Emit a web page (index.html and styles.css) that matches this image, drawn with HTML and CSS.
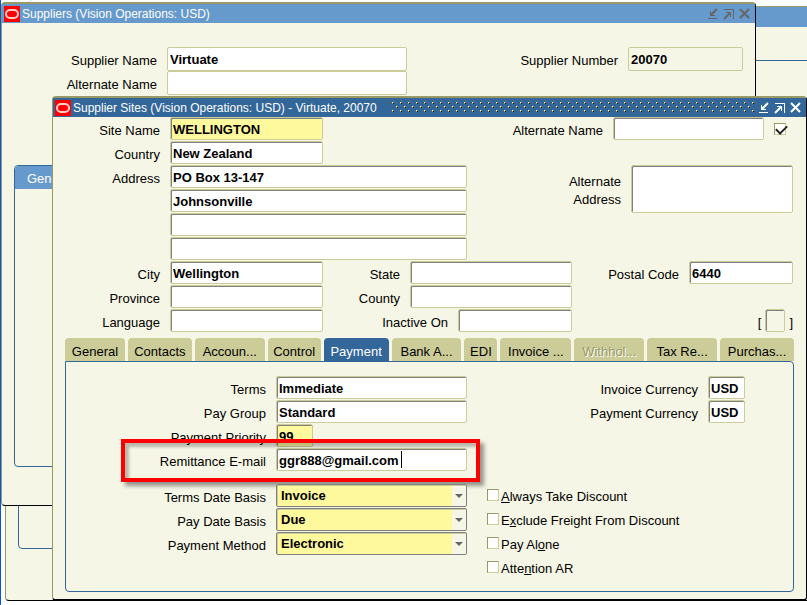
FILE: index.html
```
<!DOCTYPE html>
<html lang="en">
<head>
    <meta charset="UTF-8" />
    <meta name="viewport" content="width=device-width, initial-scale=1" />
    <title>Supplier Sites</title>
    <link rel="stylesheet" href="styles.css">
</head>
<body>
    <svg class="sprite" aria-hidden="true">
        <symbol id="oracle" viewBox="0 0 16 16">
            <rect width="16" height="16" fill="#ff0000" />
            <rect x="2" y="4" width="12" height="8" rx="4" fill="none" stroke="#ffd0c8" stroke-width="2" />
        </symbol>
        <symbol id="minimize" viewBox="0 0 12 12">
            <path d="M1 10h9v1h-9zM3 3h1v4h4v1h-5z" fill="currentColor" />
            <path d="M10 1L4 7" fill="none" stroke="currentColor" stroke-width="2" />
        </symbol>
        <symbol id="maximize" viewBox="0 0 12 12">
            <path d="M1 1h10v10h-1v-9h-9zM3 4h5v5h-1v-4h-4z" fill="currentColor" />
            <path d="M1 11L7 5" fill="none" stroke="currentColor" stroke-width="2" />
        </symbol>
        <symbol id="close" viewBox="0 0 12 12">
            <path d="M1 1l9 9M10 1L1 10" fill="none" stroke="currentColor" stroke-width="2" />
        </symbol>
    </svg>

    <div class="desktop">
        <div class="window window-back">
            <div class="title-bar"></div>
            <div class="back-panel"></div>
        </div>

        <section class="window window-suppliers">
            <header class="title-bar">
                <svg class="logo"><use href="#oracle" /></svg>
                <h2>Suppliers (Vision Operations: USD)</h2>
                <div class="window-buttons">
                    <button type="button" aria-label="Minimize"><svg><use href="#minimize" /></svg></button>
                    <button type="button" aria-label="Maximize"><svg><use href="#maximize" /></svg></button>
                    <button type="button" aria-label="Close"><svg><use href="#close" /></svg></button>
                </div>
            </header>
            <form class="supplier-form">
                <div class="supplier-main">
                    <div class="row">
                        <label for="supplierName">Supplier Name</label>
                        <input class="flat w-supplier" type="text" id="supplierName" value="Virtuate" />
                    </div>
                    <div class="row">
                        <label for="supplierAlt">Alternate Name</label>
                        <input class="flat w-supplier" type="text" id="supplierAlt" />
                    </div>
                </div>
                <div class="row">
                    <label for="supplierNumber">Supplier Number</label>
                    <input class="flat readonly w-number" type="text" id="supplierNumber" value="20070" readonly />
                </div>
            </form>
            <div class="supplier-panel">
                <button type="button" class="supplier-tab">General</button>
            </div>
        </section>

        <section class="window window-sites">
            <header class="title-bar">
                <svg class="logo"><use href="#oracle" /></svg>
                <h2>Supplier Sites (Vision Operations: USD) - Virtuate, 20070</h2>
                <svg class="grip" aria-hidden="true">
                    <pattern id="dots" width="8" height="8" patternUnits="userSpaceOnUse">
                        <path d="M0 0h1v1h-1zM4 4h1v1h-1z" fill="#ffffcc" />
                        <path d="M1 0h1v1h-1zM0 1h1v1h-1zM5 4h1v1h-1zM4 5h1v1h-1z" fill="#999966" />
                        <path d="M1 1h1v1h-1zM5 5h1v1h-1z" fill="#000000" />
                    </pattern>
                    <rect width="100%" height="12" fill="url(#dots)" />
                </svg>
                <div class="window-buttons">
                    <button type="button" aria-label="Minimize"><svg><use href="#minimize" /></svg></button>
                    <button type="button" aria-label="Maximize"><svg><use href="#maximize" /></svg></button>
                    <button type="button" aria-label="Close"><svg><use href="#close" /></svg></button>
                </div>
            </header>

            <form class="sites-form">
                <div class="site-top">
                    <div class="site-left">
                        <div class="row">
                            <label for="siteName">Site Name</label>
                            <input class="required w-short" type="text" id="siteName" value="WELLINGTON" />
                        </div>
                        <div class="row">
                            <label for="country">Country</label>
                            <input class="w-short" type="text" id="country" value="New Zealand" />
                        </div>
                        <div class="row">
                            <label for="address1">Address</label>
                            <input class="w-long" type="text" id="address1" value="PO Box 13-147" />
                        </div>
                        <div class="row">
                            <label></label>
                            <input class="w-long" type="text" aria-label="Address line 2" value="Johnsonville" />
                        </div>
                        <div class="row">
                            <label></label>
                            <input class="w-long" type="text" aria-label="Address line 3" />
                        </div>
                        <div class="row">
                            <label></label>
                            <input class="w-long" type="text" aria-label="Address line 4" />
                        </div>
                    </div>
                    <div class="site-right">
                        <div class="row alt-name">
                            <label for="siteAlt">Alternate Name</label>
                            <input class="w-alt" type="text" id="siteAlt" />
                            <input class="check" type="checkbox" aria-label="Enabled" checked />
                        </div>
                        <div class="row alt-address">
                            <label for="altAddress">Alternate<br>Address</label>
                            <textarea id="altAddress"></textarea>
                        </div>
                    </div>
                </div>

                <div class="site-location">
                    <div class="site-left">
                        <div class="row">
                            <label for="city">City</label>
                            <input class="w-short" type="text" id="city" value="Wellington" />
                        </div>
                        <div class="row">
                            <label for="province">Province</label>
                            <input class="w-short" type="text" id="province" />
                        </div>
                        <div class="row">
                            <label for="language">Language</label>
                            <input class="w-short" type="text" id="language" />
                        </div>
                    </div>
                    <div class="site-middle">
                        <div class="row">
                            <label for="state">State</label>
                            <input class="w-state" type="text" id="state" />
                        </div>
                        <div class="row">
                            <label for="county">County</label>
                            <input class="w-state" type="text" id="county" />
                        </div>
                        <div class="row">
                            <label for="inactiveOn">Inactive On</label>
                            <input class="w-date" type="text" id="inactiveOn" />
                        </div>
                    </div>
                    <div class="site-end">
                        <div class="row">
                            <label for="postalCode">Postal Code</label>
                            <input class="w-postal" type="text" id="postalCode" value="6440" />
                        </div>
                        <div class="row flexfield">
                            <span>[</span>
                            <input class="readonly w-flex" type="text" aria-label="Descriptive flexfield" />
                            <span>]</span>
                        </div>
                    </div>
                </div>

                <nav class="tabs">
                    <button type="button">General</button>
                    <button type="button">Contacts</button>
                    <button type="button">Accoun...</button>
                    <button type="button">Control</button>
                    <button type="button" class="active">Payment</button>
                    <button type="button">Bank A...</button>
                    <button type="button">EDI</button>
                    <button type="button">Invoice ...</button>
                    <button type="button" disabled>Withhol...</button>
                    <button type="button">Tax Re...</button>
                    <button type="button">Purchas...</button>
                </nav>

                <div class="panel">
                    <div class="panel-top">
                        <div class="payment-left">
                            <div class="row">
                                <label for="terms">Terms</label>
                                <input class="w-pay" type="text" id="terms" value="Immediate" />
                            </div>
                            <div class="row">
                                <label for="payGroup">Pay Group</label>
                                <input class="w-pay" type="text" id="payGroup" value="Standard" />
                            </div>
                            <div class="row">
                                <label for="priority">Payment Priority</label>
                                <input class="required w-code" type="text" id="priority" value="99" />
                            </div>
                            <div class="row remittance">
                                <label for="email">Remittance E-mail</label>
                                <div class="email-field">
                                    <input class="w-pay" type="text" id="email" value="ggr888@gmail.com" />
                                    <span class="caret"></span>
                                </div>
                                <div class="highlight"></div>
                            </div>
                        </div>
                        <div class="currencies">
                            <div class="row">
                                <label for="invoiceCurrency">Invoice Currency</label>
                                <input class="w-code" type="text" id="invoiceCurrency" value="USD" />
                            </div>
                            <div class="row">
                                <label for="paymentCurrency">Payment Currency</label>
                                <input class="w-code" type="text" id="paymentCurrency" value="USD" />
                            </div>
                        </div>
                    </div>

                    <div class="panel-bottom">
                        <div class="payment-left">
                            <div class="row">
                                <label for="termsDate">Terms Date Basis</label>
                                <div class="dropdown"><select id="termsDate"><option>Invoice</option></select></div>
                            </div>
                            <div class="row">
                                <label for="payDate">Pay Date Basis</label>
                                <div class="dropdown"><select id="payDate"><option>Due</option></select></div>
                            </div>
                            <div class="row">
                                <label for="method">Payment Method</label>
                                <div class="dropdown"><select id="method"><option>Electronic</option></select></div>
                            </div>
                        </div>
                        <div class="options">
                            <label><input class="check" type="checkbox" /><span><u>A</u>lways Take Discount</span></label>
                            <label><input class="check" type="checkbox" /><span>E<u>x</u>clude Freight From Discount</span></label>
                            <label><input class="check" type="checkbox" /><span>Pay Al<u>o</u>ne</span></label>
                            <label><input class="check" type="checkbox" /><span>Atte<u>n</u>tion AR</span></label>
                        </div>
                    </div>
                </div>
            </form>
        </section>
    </div>
</body>
</html>
```
FILE: styles.css
```
* {
    box-sizing: border-box;
}
body {
    margin: 0;
    background: #ffffff;
    color: #000000;
    font: 13px/18px "Liberation Sans", Arial, sans-serif;
}
button, input, select, textarea {
    font: inherit;
    color: inherit;
    margin: 0;
}
.sprite {
    display: none;
}
.desktop {
    position: relative;
    min-height: 100vh;
    overflow: hidden;
    border-left: 1px solid #0055e5;
}

/* windows */
.window {
    position: absolute;
    background: #f6f6e6;
    border: 1px solid #999966;
    border-right-color: #000000;
    border-bottom-color: #000000;
    border-radius: 4px;
}
.window-back {
    top: 6px;
    left: 4px;
    right: -20px;
    bottom: 4px;
}
.window-suppliers {
    top: 2px;
    left: 0;
    right: 51px;
    bottom: 99px;
    border-top-width: 2px;
}
.window-sites {
    top: 96px;
    left: 51px;
    right: 0;
    bottom: 4px;
    border-top-width: 2px;
    border-bottom-width: 2px;
}
.title-bar {
    display: flex;
    align-items: center;
    gap: 2px;
    height: 19px;
    padding: 0 4px 0 2px;
    background: #6699cc;
    color: #ffffff;
}
.window-back .title-bar {
    height: 20px;
}
.window-sites .title-bar {
    background: #336699;
}
.title-bar h2 {
    margin: 0;
    font-size: 12px;
    font-weight: normal;
    white-space: nowrap;
}
.logo {
    flex: none;
    width: 16px;
    height: 16px;
}
.grip {
    flex: 1;
    height: 12px;
    margin: 0 0 0 13px;
}
.window-buttons {
    display: flex;
    gap: 4px;
    margin-left: auto;
    color: #666666;
}
.window-sites .window-buttons {
    color: #ffffff;
}
.window-buttons button {
    display: flex;
    padding: 0;
    border: 0;
    background: none;
}
.window-buttons svg {
    width: 12px;
    height: 12px;
}
.back-panel {
    height: 489px;
    margin: 33px 0 0 12px;
    border: 1px solid #336699;
    border-radius: 4px;
}

/* fields */
.row {
    display: flex;
    align-items: flex-start;
    gap: 10px;
    height: 24px;
}
.row label {
    padding-top: 5px;
    text-align: right;
    white-space: nowrap;
}
input[type="text"], textarea {
    height: 23px;
    padding: 1px 2px 0;
    border: 1px solid #cccc99;
    border-radius: 2px;
    background: #ffffff;
    box-shadow: inset 1px 1px #808080;
    font-weight: bold;
    outline: none;
}
input[type="text"].flat {
    height: 24px;
    box-shadow: none;
}
input[type="text"].required {
    background: #fff99d;
}
input[type="text"].readonly {
    background: #f6f6e6;
}
textarea {
    width: 162px;
    height: 48px;
    resize: none;
}
.w-supplier { width: 240px; }
.w-number { width: 115px; }
.w-short { width: 153px; }
.w-long { width: 297px; }
.w-alt { width: 151px; }
.w-state { width: 162px; }
.w-date { width: 114px; }
.w-postal { width: 104px; }
.w-flex { width: 20px; }
.w-pay { width: 191px; }
.w-code { width: 37px; }

.check {
    appearance: none;
    flex: none;
    width: 12px;
    height: 12px;
    border: 1px solid #999966;
    border-right-color: #cccc99;
    border-bottom-color: #cccc99;
    background: #ffffff;
}
.check:checked::after {
    content: "";
    display: block;
    width: 9px;
    height: 5px;
    margin: 1px 0 0 1px;
    border: solid #222222;
    border-width: 0 0 2px 2px;
    transform: rotate(-45deg);
}

/* suppliers window */
.supplier-form {
    display: flex;
    justify-content: space-between;
    padding: 24px 12px 0 0;
}
.supplier-main label {
    width: 155px;
}
.supplier-panel {
    height: 302px;
    margin: 70px 12px 0;
    border: 1px solid #336699;
    border-radius: 4px;
}
.supplier-tab {
    display: block;
    height: 23px;
    padding: 2px 12px 0;
    border: 0;
    border-radius: 4px 4px 0 0;
    background: #6699cc;
    color: #ffffff;
}

/* supplier sites window */
.site-top, .site-location {
    display: flex;
    justify-content: space-between;
    padding-right: 13px;
}
.site-left label {
    width: 107px;
}
.site-right, .site-end, .site-middle, .currencies {
    display: flex;
    flex-direction: column;
    align-items: flex-end;
}
.alt-name {
    padding-right: 7px;
}
.alt-name .check {
    margin-top: 6px;
}
.alt-address {
    height: 48px;
    margin-top: 24px;
}
.alt-address label {
    padding-top: 8px;
}
.site-location {
    display: grid;
    grid-template-columns: 270px 249px 1fr;
}
.flexfield {
    gap: 4px;
    margin-top: 24px;
}
.flexfield span {
    padding-top: 5px;
}
.tabs {
    display: grid;
    grid-template-columns: 60fr 64fr 70fr 53fr 65fr 70fr 33fr 71fr 70fr 70fr 74fr;
    gap: 3px;
    margin: 5px 12px 0;
}
.tabs button {
    height: 23px;
    padding: 4px 0 0;
    border: 0;
    border-radius: 4px 4px 0 0;
    background: #cccc99;
    white-space: nowrap;
}
.tabs .active {
    background: #336699;
    color: #ffffff;
}
.tabs button:disabled {
    color: #999966;
    text-shadow: 1px 1px #ffffff;
}
.panel {
    margin: 0 12px;
    padding: 14px 0 11px;
    border: 1px solid #336699;
    border-radius: 0 4px 4px 4px;
}
.panel-top, .panel-bottom {
    display: flex;
}
.panel-top {
    justify-content: space-between;
    padding-right: 48px;
}
.panel-bottom {
    gap: 20px;
    margin-top: 12px;
}
.payment-left label {
    width: 200px;
}
.email-field, .remittance {
    position: relative;
}
.caret {
    position: absolute;
    top: 3px;
    left: 125px;
    width: 1px;
    height: 17px;
    background: #000000;
}
.highlight {
    position: absolute;
    top: -9px;
    right: -13px;
    bottom: -10px;
    left: 55px;
    border: 4px solid #ff0000;
    box-shadow: 4px 4px 4px rgba(0, 0, 0, 0.4), inset 4px 4px 3px rgba(0, 0, 0, 0.25);
    pointer-events: none;
}
.dropdown {
    position: relative;
}
.dropdown::after {
    content: "";
    position: absolute;
    top: 10px;
    right: 4px;
    border: solid transparent;
    border-width: 4px 4px 0;
    border-top-color: #666666;
    pointer-events: none;
}
.dropdown select {
    appearance: none;
    display: block;
    width: 191px;
    height: 23px;
    padding: 1px 4px 0;
    border: 1px solid #808080;
    border-radius: 2px;
    background: linear-gradient(to left, #f6f6e6 14px, #fff99d 14px);
    box-shadow: inset 1px 1px #cccc99;
    font-weight: bold;
}
.options label {
    display: flex;
    align-items: flex-start;
    gap: 2px;
    height: 24px;
}
.options .check {
    margin-top: 5px;
}
.options span {
    padding-top: 4px;
    white-space: nowrap;
}
```
